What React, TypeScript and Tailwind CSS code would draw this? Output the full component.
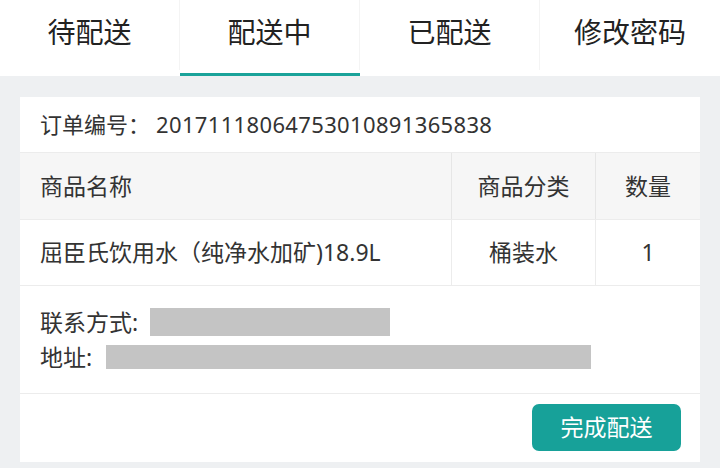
import React from "react";

const tabs = ["待配送", "配送中", "已配送", "修改密码"];

export default function App() {
  return (
    <div
      className="w-[720px] h-[468px] bg-[#eef0f2] overflow-hidden text-[#333333]"
      style={{ fontFamily: '"Noto Sans", "Noto Sans CJK SC", sans-serif' }}
    >
      <div className="flex h-[76px] bg-white">
        {tabs.map((t, i) => (
          <div
            key={t}
            className={
              i === 1
                ? "flex-1 flex justify-center border-b-[3px] border-[#1aa39a]"
                : "flex-1 flex justify-center border-b-[3px] border-transparent"
            }
          >
            <div
              className={
                i === 3
                  ? "w-full flex justify-center pt-[12px] text-[28px] leading-[40px] text-[#222222]"
                  : "w-full flex justify-center pt-[12px] text-[28px] leading-[40px] text-[#222222] border-r border-[#f4f4f4] mb-[3px]"
              }
            >
              {t}
            </div>
          </div>
        ))}
      </div>

      <div className="mx-[20px] mt-[21px] bg-white flex flex-col">
        <div className="h-[56px] flex items-center px-[20px] text-[22px] border-b border-[#ececec]">
          <span>订单编号：</span>
          <span className="ml-[6px] tracking-[0.35px]">20171118064753010891365838</span>
        </div>

        <div className="flex h-[67px] bg-[#f6f6f6] border-b border-[#ececec] text-[23px]">
          <div className="w-[432px] flex items-center px-[20px] border-r border-[#e6e6e6]">
            商品名称
          </div>
          <div className="w-[144px] flex items-center justify-center border-r border-[#e6e6e6]">
            商品分类
          </div>
          <div className="flex-1 flex items-center justify-center">数量</div>
        </div>

        <div className="flex h-[66px] border-b border-[#ececec] text-[23px]">
          <div className="w-[432px] flex items-center px-[20px] border-r border-[#ececec]">
            屈臣氏饮用水（纯净水加矿)18.9L
          </div>
          <div className="w-[144px] flex items-center justify-center border-r border-[#ececec]">
            桶装水
          </div>
          <div className="flex-1 flex items-center justify-center">1</div>
        </div>

        <div className="h-[108px] flex flex-col pl-[20px] pt-[22px] border-b border-[#ececec] text-[23px]">
          <div className="flex items-center h-[28px]">
            <span className="w-[110px] leading-[28px]">联系方式:</span>
            <span className="w-[240px] h-[28px] bg-[#c4c4c4]" />
          </div>
          <div className="flex items-center h-[24px] mt-[9px]">
            <span className="w-[66px] leading-[24px]">地址:</span>
            <span className="w-[485px] h-[24px] bg-[#c4c4c4]" />
          </div>
        </div>

        <div className="h-[68px] flex items-start justify-end pr-[19px] pt-[10px]">
          <button className="w-[149px] h-[47px] rounded-[7px] bg-[#17a199] text-white text-[23px] flex items-center justify-center">
            完成配送
          </button>
        </div>
      </div>
    </div>
  );
}
